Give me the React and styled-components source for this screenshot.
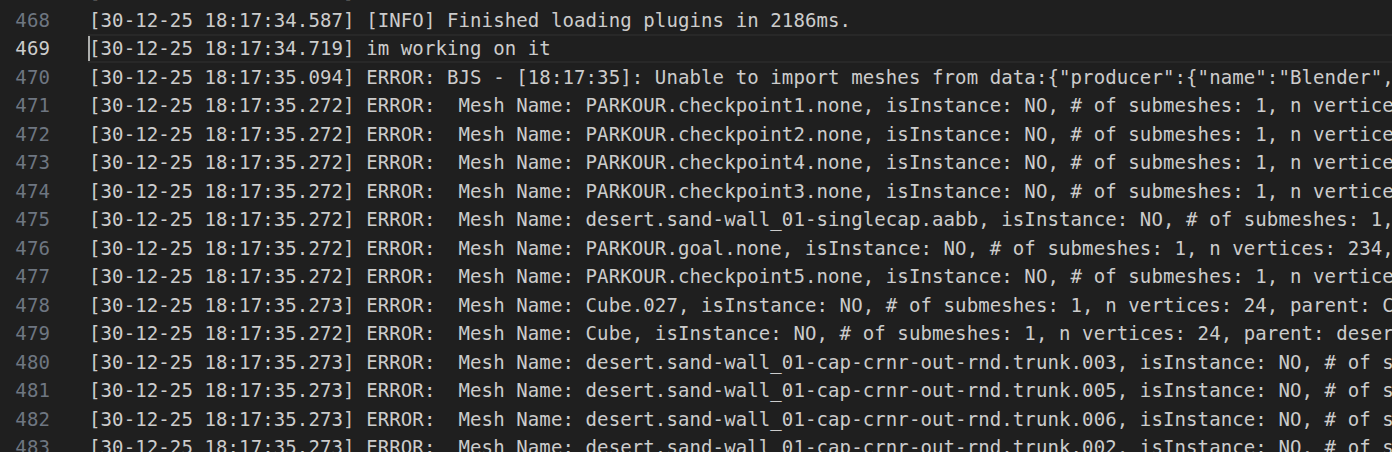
import React from "react";
import styled, { createGlobalStyle } from "styled-components";

const GlobalStyle = createGlobalStyle`
  html, body {
    margin: 0;
    padding: 0;
    background: #1f1f1f;
    overflow: hidden;
  }
`;

const Editor = styled.div`
  width: 1392px;
  height: 452px;
  overflow: hidden;
  background: #1f1f1f;
  font-family: "DejaVu Sans Mono", "Liberation Mono", monospace;
  font-size: 19.05px;
  letter-spacing: 0.09px;
`;

const Lines = styled.div`
  display: flex;
  flex-direction: column;
  margin-top: -22.75px;
`;

const Row = styled.div`
  display: grid;
  grid-template-columns: 50px 1fr;
  column-gap: 39px;
  height: 28.5px;
  line-height: 28.5px;
`;

const LineNumber = styled.span`
  text-align: right;
  color: ${({ $active }) => ($active ? "#cccccc" : "#6e7681")};
`;

const Code = styled.span`
  position: relative;
  white-space: pre;
  overflow: hidden;
  color: #cccccc;
  box-sizing: border-box;
  margin-left: -1px;
  padding-left: 1px;
  ${({ $active }) =>
    $active &&
    `
    border-top: 2px solid #282828;
    border-bottom: 2px solid #282828;
    line-height: 24.5px;
    &::before {
      content: "";
      position: absolute;
      left: 0;
      top: -2px;
      bottom: -2px;
      width: 2px;
      background: #aeafad;
    }
  `}
`;

const ts = (s) => `[30-12-25 18:17:${s}]`;
const mesh = (s, name, rest) =>
  `${ts(s)} ERROR:  Mesh Name: ${name}, isInstance: NO, # of submeshes: 1, n vertices: ${rest}`;

const lines = [
  [467, `${ts("34.401")} Initialized ENGINE`],
  [468, `${ts("34.587")} [INFO] Finished loading plugins in 2186ms.`],
  [469, `${ts("34.719")} im working on it`],
  [
    470,
    `${ts("35.094")} ERROR: BJS - [18:17:35]: Unable to import meshes from data:{"producer":{"name":"Blender","version":"3.6"}}`,
  ],
  [471, mesh("35.272", "PARKOUR.checkpoint1.none", "24, parent: PARKOUR")],
  [472, mesh("35.272", "PARKOUR.checkpoint2.none", "24, parent: PARKOUR")],
  [473, mesh("35.272", "PARKOUR.checkpoint4.none", "24, parent: PARKOUR")],
  [474, mesh("35.272", "PARKOUR.checkpoint3.none", "24, parent: PARKOUR")],
  [475, mesh("35.272", "desert.sand-wall_01-singlecap.aabb", "24, parent: desert")],
  [476, mesh("35.272", "PARKOUR.goal.none", "234, parent: PARKOUR")],
  [477, mesh("35.272", "PARKOUR.checkpoint5.none", "24, parent: PARKOUR")],
  [478, mesh("35.273", "Cube.027", "24, parent: Cube")],
  [479, mesh("35.272", "Cube", "24, parent: desert")],
  [480, mesh("35.273", "desert.sand-wall_01-cap-crnr-out-rnd.trunk.003", "24, parent: desert")],
  [481, mesh("35.273", "desert.sand-wall_01-cap-crnr-out-rnd.trunk.005", "24, parent: desert")],
  [482, mesh("35.273", "desert.sand-wall_01-cap-crnr-out-rnd.trunk.006", "24, parent: desert")],
  [483, mesh("35.273", "desert.sand-wall_01-cap-crnr-out-rnd.trunk.002", "24, parent: desert")],
];

const ACTIVE = 469;

export default function App() {
  return (
    <>
      <GlobalStyle />
      <Editor>
        <Lines>
          {lines.map(([n, text]) => (
            <Row key={n}>
              <LineNumber $active={n === ACTIVE}>{n}</LineNumber>
              <Code $active={n === ACTIVE}>{text}</Code>
            </Row>
          ))}
        </Lines>
      </Editor>
    </>
  );
}
